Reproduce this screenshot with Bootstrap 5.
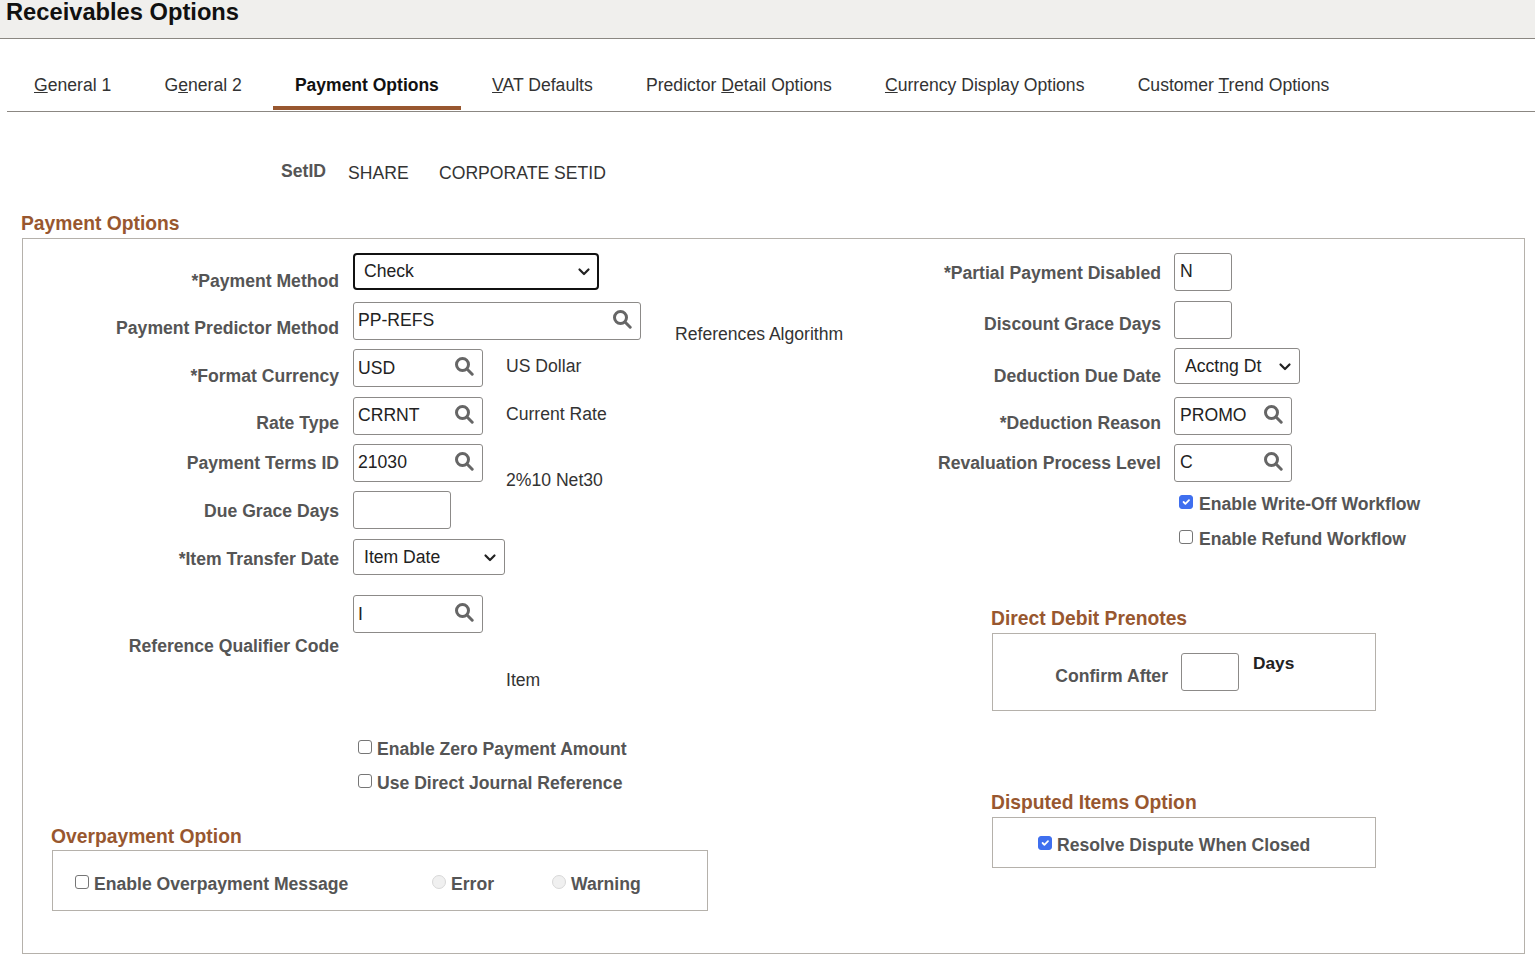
<!DOCTYPE html>
<html lang="en">
<head>
  <meta charset="UTF-8" />
  <title>Receivables Options</title>
  <meta name="viewport" content="width=device-width, initial-scale=1" />
  <link href="https://cdn.jsdelivr.net/npm/bootstrap@5.3.0/dist/css/bootstrap.min.css" rel="stylesheet"/>
  <style>
    html, body { height: 961px; overflow: hidden; }
    body { font-family: "Liberation Sans", Arial, sans-serif; font-size: 17.6px; line-height: 24px; color: #333; background: #fff; }

    .page-head { height: 39px; background: #f0efed; border-bottom: 1px solid #8b8782; }
    .page-title { font-size: 23.7px; font-weight: 700; line-height: 24px; margin: 0; padding: 0 0 0 6px; color: #111; }

    .tab-bar { margin: 33px 0 0 7px; padding-left: 5px; height: 40px; border-bottom: 1px solid #8b8782; gap: 9.2px; }
    .tab-bar .nav-link { height: 38px; padding: 1px 22px 0; color: #333; font-size: 17.6px; line-height: 24px; border-bottom: 4px solid transparent; }
    .tab-bar .nav-link.active { color: #111; font-size: 17.5px; font-weight: 700; border-bottom-color: #98572f; }

    .setid-row { height: 100px; padding: 49px 0 0 281px; }
    .setid-lbl { width: 67px; font-weight: 700; color: #555; margin-top: -2px; }
    .setid-val { width: 91px; }

    .sect-title { font-size: 19.3px; font-weight: 700; line-height: 24px; color: #98572f; margin: 0; }
    .main-title { padding-left: 21px; height: 26px; }
    .main-panel { margin-left: 22px; margin-right: 10px; height: 716px; padding-top: 14px; border: 1px solid #b5b1ab; }
    .col-left { width: 907px; flex: none; }
    .col-right { flex: 1; }

    .frow { display: flex; align-items: flex-start; }
    .flbl { flex: none; text-align: right; font-weight: 700; color: #555; }
    .col-left .flbl { width: 316px; margin-right: 14px; }
    .col-right .flbl { width: 231px; margin-right: 13px; }
    .desc { flex: none; color: #333; }

    .h-34 { height: 34px; }
    .h-35 { height: 35px; }
    .h-47 { height: 47px; }
    .h-48 { height: 48px; }
    .h-49 { height: 49px; }
    .h-54 { height: 54px; }
    .h-56 { height: 56px; }
    .h-142 { height: 142px; }
    .pad-7 { padding-top: 7px; }
    .pad-8 { padding-top: 8px; }
    .pad-11 { padding-top: 11px; }
    .pad-14 { padding-top: 14px; }
    .pad-15 { padding-top: 15px; }
    .pad-16 { padding-top: 16px; }
    .pad-39 { padding-top: 39px; }

    .field-box { display: flex; align-items: center; height: 38px; border: 1px solid #8c8a88; border-radius: 3px; background: #fff; }
    .field-box .form-control { border: 0; padding: 0 0 0 4px; background: transparent; box-shadow: none; font-size: 17.6px; color: #222; min-width: 0; height: 34px; border-radius: 0; }
    .field-box.box-short .form-control { margin-top: -2px; }
    .col-right .field-box .form-control { padding-left: 5px; }
    .field-box svg { flex: none; margin: -5px 8px 0 0; }
    .w-58 { width: 58px; }
    .w-98 { width: 98px; }
    .w-118 { width: 118px; }
    .w-130 { width: 130px; }
    .w-288 { width: 288px; }

    .pick { height: 36px; padding: 0 24px 0 10px; font-size: 17.6px; line-height: 32px; color: #222; border: 1px solid #8c8a88; border-radius: 3px; background-position: right 7px center; background-size: 14px 11px;
      background-image: url("data:image/svg+xml,%3csvg xmlns='http://www.w3.org/2000/svg' viewBox='0 0 14 11'%3e%3cpath fill='none' stroke='%23222' stroke-width='2.2' stroke-linecap='round' stroke-linejoin='round' d='M2.5 3.5L7 8l4.5-4.5'/%3e%3c/svg%3e"); }
    .pick:focus { box-shadow: none; border-color: #8c8a88; }
    .pick-check { width: 246px; height: 37px; padding: 0 24px 2px 9px; border: 2px solid #111; border-radius: 4px; background-position: right 6px center; }
    .pick-item { width: 152px; }
    .pick-acct { width: 126px; }

    .desc-code { margin-left: 23px; }
    .desc-5 { padding-top: 5px; }
    .desc-24 { padding-top: 24px; }
    .desc-73 { padding-top: 73px; }
    .refs { margin: 20px 0 0 34px; }

    .tick { display: flex; align-items: center; margin: 0; font-weight: 700; color: #555; }
    .tick .form-check-input { width: 14px; height: 14px; margin: -5px 5px 0 0; flex: none; border: 1px solid #767676; border-radius: 3px; }
    .tick .form-check-input:checked { background-color: #3f6fef; border-color: #3f6fef; }
    .tick .form-check-input[type=radio] { border-radius: 50%; border-color: #d8d8d8; background-color: #f0f0f0; opacity: 1; }
    .tick-left { padding-left: 335px; }
    .tick-right { padding: 1px 0 0 249px; }
    .tick-right .form-check-input { margin-right: 6px; }

    .over-title { padding-left: 28px; height: 25px; }
    .over-box { margin-left: 29px; width: 656px; height: 61px; padding: 21px 0 0 22px; border: 1px solid #b5b1ab; }
    .over-msg { width: 357px; }
    .over-err { width: 120px; }

    .debit-title { margin: 56px 0 0 61px; height: 26px; }
    .debit-box { margin-left: 62px; width: 384px; height: 78px; padding-top: 19px; border: 1px solid #b5b1ab; }
    .confirm { width: 175px; text-align: right; font-weight: 700; color: #555; padding-top: 11px; margin-right: 13px; }
    .days { margin: -2px 0 0 14px; font-weight: 700; color: #222; font-size: 17.3px; }
    .gap-debit { height: 80px; }
    .disp-title { margin-left: 61px; height: 26px; }
    .disp-box { margin-left: 62px; width: 384px; height: 51px; padding: 15px 0 0 45px; border: 1px solid #b5b1ab; }
  </style>
</head>
<body>
  <div class="page-head">
    <h1 class="page-title">Receivables Options</h1>
  </div>

  <ul class="nav tab-bar">
    <li class="nav-item"><a class="nav-link" href="#"><u>G</u>eneral 1</a></li>
    <li class="nav-item"><a class="nav-link" href="#">G<u>e</u>neral 2</a></li>
    <li class="nav-item"><a class="nav-link active" href="#">Payment Options</a></li>
    <li class="nav-item"><a class="nav-link" href="#"><u>V</u>AT Defaults</a></li>
    <li class="nav-item"><a class="nav-link" href="#">Predictor <u>D</u>etail Options</a></li>
    <li class="nav-item"><a class="nav-link" href="#"><u>C</u>urrency Display Options</a></li>
    <li class="nav-item"><a class="nav-link" href="#">Customer <u>T</u>rend Options</a></li>
  </ul>

  <div class="setid-row d-flex">
    <span class="setid-lbl">SetID</span>
    <span class="setid-val">SHARE</span>
    <span>CORPORATE SETID</span>
  </div>

  <h2 class="sect-title main-title">Payment Options</h2>

  <div class="main-panel d-flex">
    <!-- left column -->
    <div class="col-left">
      <div class="frow h-49">
        <label class="flbl pad-16">*Payment Method</label>
        <select class="form-select pick pick-check"><option>Check</option></select>
      </div>
      <div class="frow h-47">
        <label class="flbl pad-14">Payment Predictor Method</label>
        <div class="field-box box-short w-288">
          <input class="form-control" value="PP-REFS">
          <svg width="20" height="20" viewBox="0 0 20 20" fill="none" stroke="#666" stroke-width="3"><circle cx="8.5" cy="8.5" r="6"/><path d="M13 13l5.2 5.2" stroke-linecap="round"/></svg>
        </div>
        <span class="desc refs">References Algorithm</span>
      </div>
      <div class="frow h-48">
        <label class="flbl pad-15">*Format Currency</label>
        <div class="field-box w-130">
          <input class="form-control" value="USD">
          <svg width="20" height="20" viewBox="0 0 20 20" fill="none" stroke="#666" stroke-width="3"><circle cx="8.5" cy="8.5" r="6"/><path d="M13 13l5.2 5.2" stroke-linecap="round"/></svg>
        </div>
        <span class="desc desc-code desc-5">US Dollar</span>
      </div>
      <div class="frow h-47">
        <label class="flbl pad-14">Rate Type</label>
        <div class="field-box box-short w-130">
          <input class="form-control" value="CRRNT">
          <svg width="20" height="20" viewBox="0 0 20 20" fill="none" stroke="#666" stroke-width="3"><circle cx="8.5" cy="8.5" r="6"/><path d="M13 13l5.2 5.2" stroke-linecap="round"/></svg>
        </div>
        <span class="desc desc-code desc-5">Current Rate</span>
      </div>
      <div class="frow h-47">
        <label class="flbl pad-7">Payment Terms ID</label>
        <div class="field-box box-short w-130">
          <input class="form-control" value="21030">
          <svg width="20" height="20" viewBox="0 0 20 20" fill="none" stroke="#666" stroke-width="3"><circle cx="8.5" cy="8.5" r="6"/><path d="M13 13l5.2 5.2" stroke-linecap="round"/></svg>
        </div>
        <span class="desc desc-code desc-24">2%10 Net30</span>
      </div>
      <div class="frow h-48">
        <label class="flbl pad-8">Due Grace Days</label>
        <div class="field-box w-98"><input class="form-control"></div>
      </div>
      <div class="frow h-56">
        <label class="flbl pad-8">*Item Transfer Date</label>
        <select class="form-select pick pick-item"><option>Item Date</option></select>
      </div>
      <div class="frow h-142">
        <label class="flbl pad-39">Reference Qualifier Code</label>
        <div class="field-box w-130">
          <input class="form-control" value="I">
          <svg width="20" height="20" viewBox="0 0 20 20" fill="none" stroke="#666" stroke-width="3"><circle cx="8.5" cy="8.5" r="6"/><path d="M13 13l5.2 5.2" stroke-linecap="round"/></svg>
        </div>
        <span class="desc desc-code desc-73">Item</span>
      </div>
      <div class="tick-left">
        <div class="h-34"><label class="tick"><input class="form-check-input" type="checkbox">Enable Zero Payment Amount</label></div>
        <div class="h-54"><label class="tick"><input class="form-check-input" type="checkbox">Use Direct Journal Reference</label></div>
      </div>
      <h2 class="sect-title over-title">Overpayment Option</h2>
      <div class="over-box d-flex">
        <label class="tick over-msg align-self-start"><input class="form-check-input" type="checkbox">Enable Overpayment Message</label>
        <label class="tick over-err align-self-start"><input class="form-check-input" type="radio" name="overMsg" disabled>Error</label>
        <label class="tick align-self-start"><input class="form-check-input" type="radio" name="overMsg" disabled>Warning</label>
      </div>
    </div>

    <!-- right column -->
    <div class="col-right">
      <div class="frow h-48">
        <label class="flbl pad-8">*Partial Payment Disabled</label>
        <div class="field-box box-short w-58"><input class="form-control" value="N"></div>
      </div>
      <div class="frow h-47">
        <label class="flbl pad-11">Discount Grace Days</label>
        <div class="field-box w-58"><input class="form-control"></div>
      </div>
      <div class="frow h-49">
        <label class="flbl pad-16">Deduction Due Date</label>
        <select class="form-select pick pick-acct"><option>Acctng Dt</option></select>
      </div>
      <div class="frow h-47">
        <label class="flbl pad-14">*Deduction Reason</label>
        <div class="field-box box-short w-118">
          <input class="form-control" value="PROMO">
          <svg width="20" height="20" viewBox="0 0 20 20" fill="none" stroke="#666" stroke-width="3"><circle cx="8.5" cy="8.5" r="6"/><path d="M13 13l5.2 5.2" stroke-linecap="round"/></svg>
        </div>
      </div>
      <div class="frow h-47">
        <label class="flbl pad-7">Revaluation Process Level</label>
        <div class="field-box box-short w-118">
          <input class="form-control" value="C">
          <svg width="20" height="20" viewBox="0 0 20 20" fill="none" stroke="#666" stroke-width="3"><circle cx="8.5" cy="8.5" r="6"/><path d="M13 13l5.2 5.2" stroke-linecap="round"/></svg>
        </div>
      </div>
      <div class="tick-right">
        <div class="h-35"><label class="tick"><input class="form-check-input" type="checkbox" checked>Enable Write-Off Workflow</label></div>
        <div><label class="tick"><input class="form-check-input" type="checkbox">Enable Refund Workflow</label></div>
      </div>

      <h2 class="sect-title debit-title">Direct Debit Prenotes</h2>
      <div class="debit-box d-flex">
        <span class="confirm">Confirm After</span>
        <div class="field-box w-58"><input class="form-control"></div>
        <span class="days">Days</span>
      </div>
      <div class="gap-debit"></div>
      <h2 class="sect-title disp-title">Disputed Items Option</h2>
      <div class="disp-box">
        <label class="tick"><input class="form-check-input" type="checkbox" checked>Resolve Dispute When Closed</label>
      </div>
    </div>
  </div>

  <script src="https://cdn.jsdelivr.net/npm/bootstrap@5.3.0/dist/js/bootstrap.bundle.min.js"></script>
</body>
</html>
